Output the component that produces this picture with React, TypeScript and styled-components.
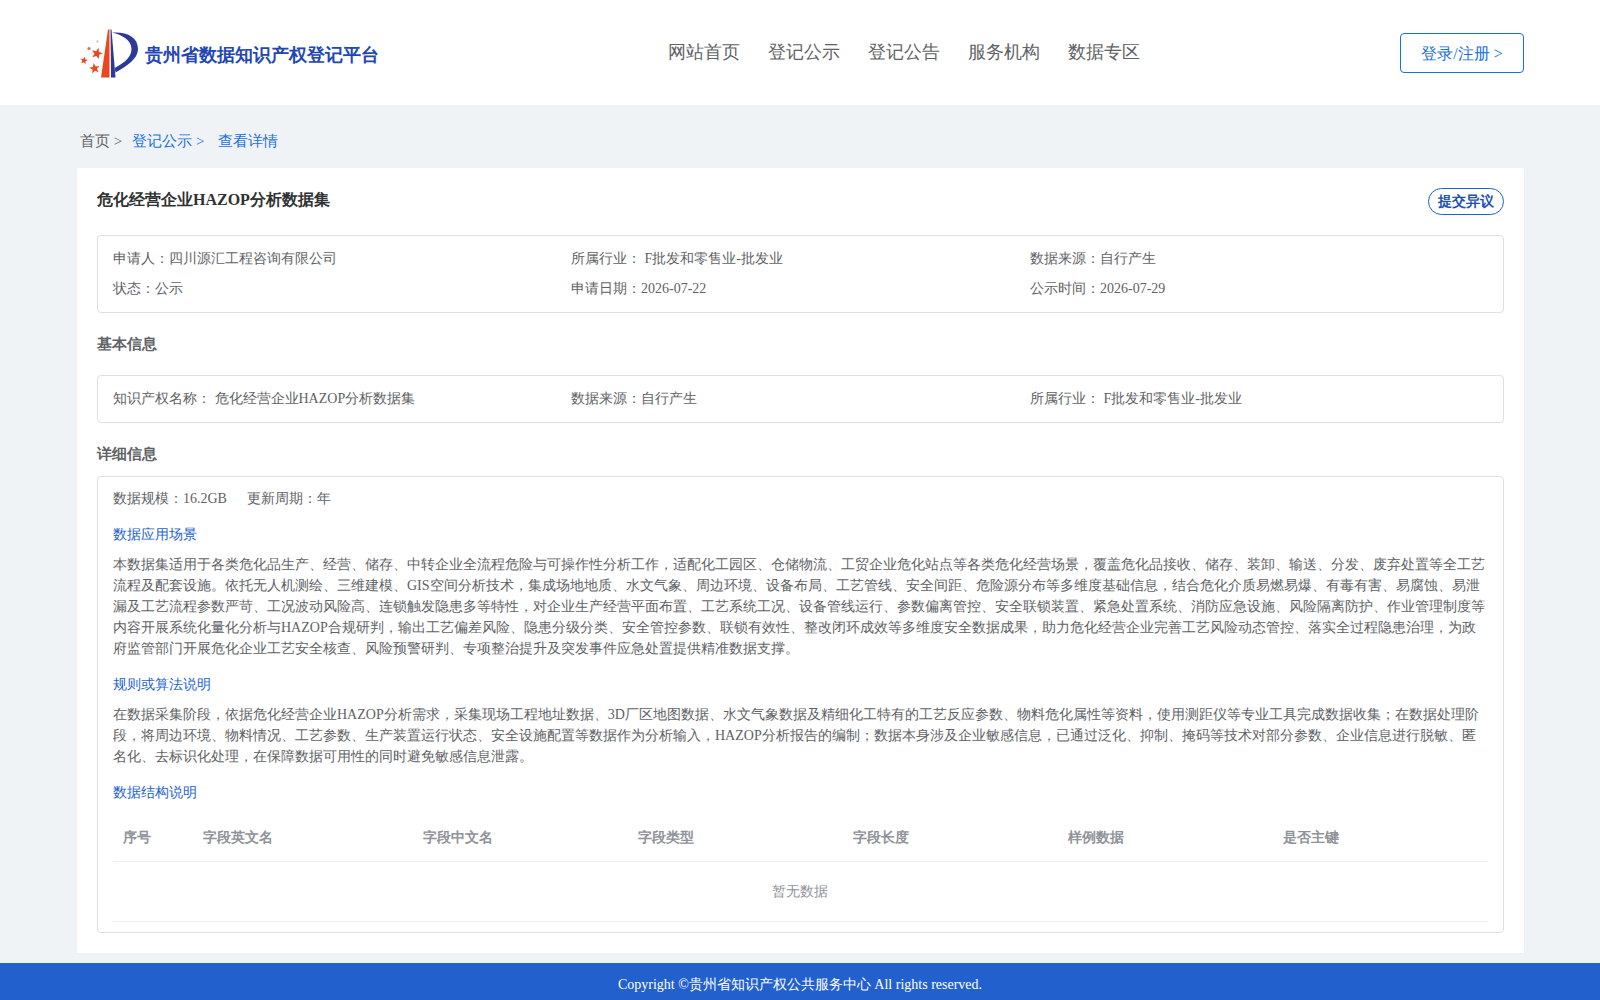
import React from "react";
import styled, { createGlobalStyle } from "styled-components";

const Global = createGlobalStyle`
  html, body { margin: 0; padding: 0; background: #eff3f6; }
  body { font-family: "Liberation Serif", serif; font-size: 14px; color: #606266; }
  * { box-sizing: border-box; }
`;

const Page = styled.div`
  width: 1600px;
  height: 1000px;
  overflow: hidden;
  display: flex;
  flex-direction: column;
`;
const Header = styled.header`
  height: 105px;
  background: #fff;
  padding: 0 76px 0 80px;
  display: grid;
  grid-template-columns: 588px 1fr auto;
  align-items: center;
`;
const Brand = styled.div`
  display: flex;
  align-items: center;
  gap: 5px;
  padding-top: 4px;
`;
const BrandName = styled.span`
  font-size: 18px;
  font-weight: 700;
  color: #2346b4;
`;
const Nav = styled.nav`
  display: flex;
  gap: 28px;
  font-size: 18px;
  color: #606266;
  margin-bottom: 1px;
`;
const LoginButton = styled.button`
  width: 124px;
  height: 40px;
  padding: 4px 0 0;
  border: 1px solid #1a6fe0;
  border-radius: 4px;
  background: #fff;
  color: #1a6fe0;
  font: inherit;
  font-size: 16px;
`;
const Main = styled.main`
  flex: 1;
  padding: 0 76px 0 77px;
`;
const Crumbs = styled.div`
  height: 63px;
  padding: 9px 3px 0 3px;
  display: flex;
  align-items: center;
  font-size: 15px;
  color: #606266;
  span + span { margin-left: 10px; }
`;
const CrumbLink = styled.span<{ $wide?: boolean }>`
  color: #1a6fe0;
  ${(p) => (p.$wide ? "margin-left: 14px !important;" : "")}
`;
const Card = styled.section`
  background: #fff;
  height: 785px;
  padding: 20px;
`;
const TitleRow = styled.div`
  display: flex;
  justify-content: space-between;
  align-items: flex-start;
  height: 47px;
`;
const Title = styled.h1`
  margin: 0;
  font-size: 16px;
  font-weight: 700;
  line-height: 24px;
  color: #303133;
`;
const Pill = styled.button`
  width: 76px;
  height: 27px;
  padding: 1px 0 0;
  border: 1px solid #1a62d0;
  border-radius: 14px;
  background: #fff;
  color: #2050b0;
  font: inherit;
  font-size: 14px;
  font-weight: 700;
`;
const Box = styled.div<{ $h?: number; $mb?: number }>`
  border: 1px solid #dcdfe6;
  border-radius: 4px;
  padding: 0 15px;
  ${(p) => (p.$h ? `height: ${p.$h}px;` : "")}
  margin-bottom: ${(p) => p.$mb ?? 0}px;
`;
const InfoGrid = styled.div<{ $pad: number }>`
  display: grid;
  grid-template-columns: 458px 459px 1fr;
  row-gap: 8px;
  padding-top: ${(p) => p.$pad}px;
  line-height: 22px;
`;
const SectionTitle = styled.h2<{ $h: number }>`
  margin: 0;
  font-size: 15px;
  font-weight: 700;
  color: #606266;
  height: ${(p) => p.$h}px;
  line-height: 18px;
`;
const Meta = styled.div`
  display: flex;
  gap: 20px;
  line-height: 20px;
  padding-top: 12px;
`;
const SubTitle = styled.div`
  color: #1d63d0;
  line-height: 20px;
  margin-top: 16px;
`;
const Para = styled.p`
  margin: 9px 0 0;
  line-height: 21px;
`;
const Table = styled.div`
  margin-top: 12px;
`;
const Row = styled.div`
  display: grid;
  grid-template-columns: 80px 220px 215px 215px 215px 215px 1fr;
  height: 47px;
  align-items: center;
  border-bottom: 1px solid #eceef2;
`;
const Th = styled.div`
  padding-left: 10px;
  font-weight: 700;
  color: #909399;
`;
const Empty = styled.div`
  height: 60px;
  padding-right: 2px;
  display: flex;
  align-items: center;
  justify-content: center;
  color: #909399;
  border-bottom: 1px solid #eceef2;
`;
const Footer = styled.footer`
  margin-top: 10px;
  height: 37px;
  background: #2260ce;
  color: #fff;
  font-size: 14px;
  display: flex;
  align-items: center;
  justify-content: center;
  padding-top: 7px;
`;

const star = (cx: number, cy: number, r: number, rot = 0) => {
  const pts: string[] = [];
  for (let i = 0; i < 10; i++) {
    const rad = i % 2 === 0 ? r : r * 0.42;
    const a = ((-90 + rot + i * 36) * Math.PI) / 180;
    pts.push(`${(cx + rad * Math.cos(a)).toFixed(2)},${(cy + rad * Math.sin(a)).toFixed(2)}`);
  }
  return pts.join(" ");
};

const Logo = () => (
  <svg width="60" height="56" viewBox="0 0 60 56">
    <path d="M28 2.500 L29.500 2.500 L29.500 50.500 L21 50.500 Z" fill="#e8481c" />
    <path d="M30.500 2.500 L31.500 2.500 L35.500 50.500 L31 50.500 Z" fill="#2a3a96" />
    <path d="M32 5.500 C47 4.500 58 10 58 22 C58 32 47 39 35.500 45.500 L34.800 41 C44 36 51.500 30 51.500 22 C51.500 13 42 8 32 5.500 Z" fill="#2a3a96" />
    <polygon points={star(17, 26.500, 6, 15)} fill="#e8481c" />
    <polygon points={star(14.600, 41.500, 5.500, -10)} fill="#e8481c" />
    <polygon points={star(4, 33.500, 4, 10)} fill="#e8481c" />
    <circle cx="9" cy="21.500" r="1.600" fill="#ea6a40" />
    <circle cx="17.500" cy="14.500" r="1" fill="#f0a080" />
  </svg>
);

const navItems = ["网站首页", "登记公示", "登记公告", "服务机构", "数据专区"];
const columns = ["序号", "字段英文名", "字段中文名", "字段类型", "字段长度", "样例数据", "是否主键"];

export default function App() {
  return (
    <Page>
      <Global />
      <Header>
        <Brand>
          <Logo />
          <BrandName>贵州省数据知识产权登记平台</BrandName>
        </Brand>
        <Nav>
          {navItems.map((n) => (
            <span key={n}>{n}</span>
          ))}
        </Nav>
        <LoginButton>登录/注册 &gt;</LoginButton>
      </Header>
      <Main>
        <Crumbs>
          <span>首页 &gt;</span>
          <CrumbLink>登记公示 &gt;</CrumbLink>
          <CrumbLink $wide>查看详情</CrumbLink>
        </Crumbs>
        <Card>
          <TitleRow>
            <Title>危化经营企业HAZOP分析数据集</Title>
            <Pill>提交异议</Pill>
          </TitleRow>
          <Box $h={78} $mb={22}>
            <InfoGrid $pad={12}>
              <span>申请人：四川源汇工程咨询有限公司</span>
              <span>所属行业： F批发和零售业-批发业</span>
              <span>数据来源：自行产生</span>
              <span>状态：公示</span>
              <span>申请日期：2026-07-22</span>
              <span>公示时间：2026-07-29</span>
            </InfoGrid>
          </Box>
          <SectionTitle $h={40}>基本信息</SectionTitle>
          <Box $h={48} $mb={22}>
            <InfoGrid $pad={12}>
              <span>知识产权名称： 危化经营企业HAZOP分析数据集</span>
              <span>数据来源：自行产生</span>
              <span>所属行业： F批发和零售业-批发业</span>
            </InfoGrid>
          </Box>
          <SectionTitle $h={31}>详细信息</SectionTitle>
          <Box $h={457}>
            <Meta>
              <span>数据规模：16.2GB</span>
              <span>更新周期：年</span>
            </Meta>
            <SubTitle>数据应用场景</SubTitle>
            <Para>
              本数据集适用于各类危化品生产、经营、储存、中转企业全流程危险与可操作性分析工作，适配化工园区、仓储物流、工贸企业危化站点等各类危化经营场景，覆盖危化品接收、储存、装卸、输送、分发、废弃处置等全工艺流程及配套设施。依托无人机测绘、三维建模、GIS空间分析技术，集成场地地质、水文气象、周边环境、设备布局、工艺管线、安全间距、危险源分布等多维度基础信息，结合危化介质易燃易爆、有毒有害、易腐蚀、易泄漏及工艺流程参数严苛、工况波动风险高、连锁触发隐患多等特性，对企业生产经营平面布置、工艺系统工况、设备管线运行、参数偏离管控、安全联锁装置、紧急处置系统、消防应急设施、风险隔离防护、作业管理制度等内容开展系统化量化分析与HAZOP合规研判，输出工艺偏差风险、隐患分级分类、安全管控参数、联锁有效性、整改闭环成效等多维度安全数据成果，助力危化经营企业完善工艺风险动态管控、落实全过程隐患治理，为政府监管部门开展危化企业工艺安全核查、风险预警研判、专项整治提升及突发事件应急处置提供精准数据支撑。
            </Para>
            <SubTitle>规则或算法说明</SubTitle>
            <Para>
              在数据采集阶段，依据危化经营企业HAZOP分析需求，采集现场工程地址数据、3D厂区地图数据、水文气象数据及精细化工特有的工艺反应参数、物料危化属性等资料，使用测距仪等专业工具完成数据收集；在数据处理阶段，将周边环境、物料情况、工艺参数、生产装置运行状态、安全设施配置等数据作为分析输入，HAZOP分析报告的编制；数据本身涉及企业敏感信息，已通过泛化、抑制、掩码等技术对部分参数、企业信息进行脱敏、匿名化、去标识化处理，在保障数据可用性的同时避免敏感信息泄露。
            </Para>
            <SubTitle>数据结构说明</SubTitle>
            <Table>
              <Row>
                {columns.map((c) => (
                  <Th key={c}>{c}</Th>
                ))}
              </Row>
              <Empty>暂无数据</Empty>
            </Table>
          </Box>
        </Card>
      </Main>
      <Footer>Copyright ©贵州省知识产权公共服务中心 All rights reserved.</Footer>
    </Page>
  );
}
